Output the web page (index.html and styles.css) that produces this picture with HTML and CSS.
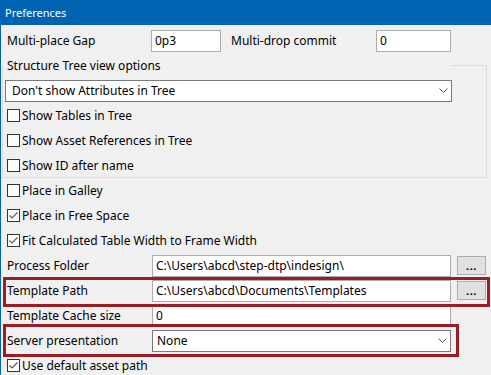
FILE: index.html
```html
<!DOCTYPE html>
<html>
<head>
<meta charset="utf-8">
<link rel="stylesheet" href="styles.css">
</head>
<body>
<div class="window">
  <div class="titlebar">Preferences</div>
  <div class="content">
    <div class="row row-top">
      <span class="label lbl-a">Multi-place Gap</span>
      <span class="input in-a">0p3</span>
      <span class="label lbl-b">Multi-drop commit</span>
      <span class="input in-b">0</span>
    </div>

    <fieldset class="group">
      <legend class="group-label">Structure Tree view options</legend>
      <div class="row row-combo">
        <div class="combo combo-tree">
          <span>Don't show Attributes in Tree</span>
          <svg class="chev" width="9" height="5" viewBox="0 0 9 5"><polyline points="0.5,0.5 4.5,4.5 8.5,0.5" fill="none" stroke="#555" stroke-width="1"/></svg>
        </div>
      </div>
      <div class="row row-in"><span class="check"><span class="box"></span>Show Tables in Tree</span></div>
      <div class="row row-in"><span class="check"><span class="box"></span>Show Asset References in Tree</span></div>
      <div class="row row-in row-last"><span class="check"><span class="box"></span>Show ID after name</span></div>
    </fieldset>

    <div class="row"><span class="check"><span class="box"></span>Place in Galley</span></div>
    <div class="row"><span class="check"><span class="box"><svg width="11" height="11" viewBox="0 0 11 11"><polyline points="1.5,5.5 4,8 9.5,2.5" fill="none" stroke="#555" stroke-width="1.1"/></svg></span>Place in Free Space</span></div>
    <div class="row"><span class="check"><span class="box"><svg width="11" height="11" viewBox="0 0 11 11"><polyline points="1.5,5.5 4,8 9.5,2.5" fill="none" stroke="#555" stroke-width="1.1"/></svg></span>Fit Calculated Table Width to Frame Width</span></div>

    <div class="row">
      <span class="label lbl-field">Process Folder</span>
      <span class="input in-wide">C:\Users\abcd\step-dtp\indesign\</span>
      <span class="btn">...</span>
    </div>
    <div class="row hl hl-template">
      <span class="label lbl-field">Template Path</span>
      <span class="input in-wide">C:\Users\abcd\Documents\Templates</span>
      <span class="btn">...</span>
    </div>
    <div class="row">
      <span class="label lbl-field">Template Cache size</span>
      <span class="input in-wide">0</span>
    </div>
    <div class="row hl hl-server">
      <span class="label lbl-field">Server presentation</span>
      <div class="combo combo-server">
        <span>None</span>
        <svg class="chev" width="9" height="5" viewBox="0 0 9 5"><polyline points="0.5,0.5 4.5,4.5 8.5,0.5" fill="none" stroke="#555" stroke-width="1"/></svg>
      </div>
    </div>
    <div class="row"><span class="check"><span class="box"><svg width="11" height="11" viewBox="0 0 11 11"><polyline points="1.5,5.5 4,8 9.5,2.5" fill="none" stroke="#555" stroke-width="1.1"/></svg></span>Use default asset path</span></div>
  </div>
</div>
</body>
</html>
```

FILE: styles.css
```css
html, body {
  margin: 0;
  padding: 0;
  background: #f0f0f0;
}
body {
  font-family: "Noto Sans", "Liberation Sans", sans-serif;
  font-size: 12px;
  color: #000;
  width: 491px;
  height: 375px;
  overflow: hidden;
}
.window {
  border-left: 1px solid #0063b1;
  height: 375px;
  box-sizing: border-box;
}
.titlebar {
  height: 25px;
  background: #0063b1;
  color: #fff;
  font-size: 11px;
  line-height: 25px;
  padding-left: 5px;
  margin-left: -1px;
}
.content {
  padding-top: 3px;
}
.row {
  height: 25px;
  display: flex;
  align-items: center;
  padding-left: 6px;
  white-space: nowrap;
}
.label {
  display: block;
}
.lbl-a { width: 144px; }
.lbl-b { width: 145px; margin-left: 10px; }
.lbl-field { width: 145px; }
.input {
  display: flex;
  align-items: center;
  box-sizing: border-box;
  height: 22px;
  background: #fff;
  border: 1px solid #adadad;
  padding-left: 3px;
}
.in-a { width: 70px; }
.in-b { width: 75px; }
.in-wide { width: 299px; }
.btn {
  display: flex;
  align-items: center;
  justify-content: center;
  box-sizing: border-box;
  width: 29px;
  height: 19px;
  margin-left: 6px;
  background: #e1e1e1;
  border: 1px solid #adadad;
  font-weight: bold;
  font-size: 11px;
  letter-spacing: 0.5px;
  padding-bottom: 1px;
}
.group {
  margin: 0 4px 0 1px;
  padding: 0;
  min-width: 0;
  border: 1px solid #dcdcdc;
}
.group-label {
  padding: 0 0 0 4px;
  width: 448px;
  box-sizing: border-box;
  height: 25px;
  line-height: 25px;
  margin: 0;
}
.row-combo { padding-left: 2px; }
.row-in { padding-left: 4px; }
.row-last { height: 24px; }
.combo {
  display: flex;
  align-items: center;
  justify-content: space-between;
  box-sizing: border-box;
  height: 22px;
  background: #fff;
  border: 1px solid #7a7a7a;
  padding-right: 3px;
}
.combo-tree { width: 447px; padding-left: 6px; }
.combo-server { width: 299px; padding-left: 4px; }
.chev { display: block; }
.check {
  display: flex;
  align-items: center;
}
.box {
  display: flex;
  align-items: center;
  justify-content: center;
  box-sizing: border-box;
  width: 13px;
  height: 13px;
  border: 1px solid #333;
  background: #fff;
  margin-right: 2px;
}
.box svg { display: block; }
.hl { position: relative; }
.hl::after {
  content: "";
  position: absolute;
  border: 3px solid #9d1c24;
  box-sizing: border-box;
  pointer-events: none;
}
.hl-template::after {
  left: 2px;
  top: -1px;
  width: 487px;
  height: 30px;
}
.hl-server::after {
  left: 2px;
  top: -4px;
  width: 456px;
  height: 33px;
}
```
